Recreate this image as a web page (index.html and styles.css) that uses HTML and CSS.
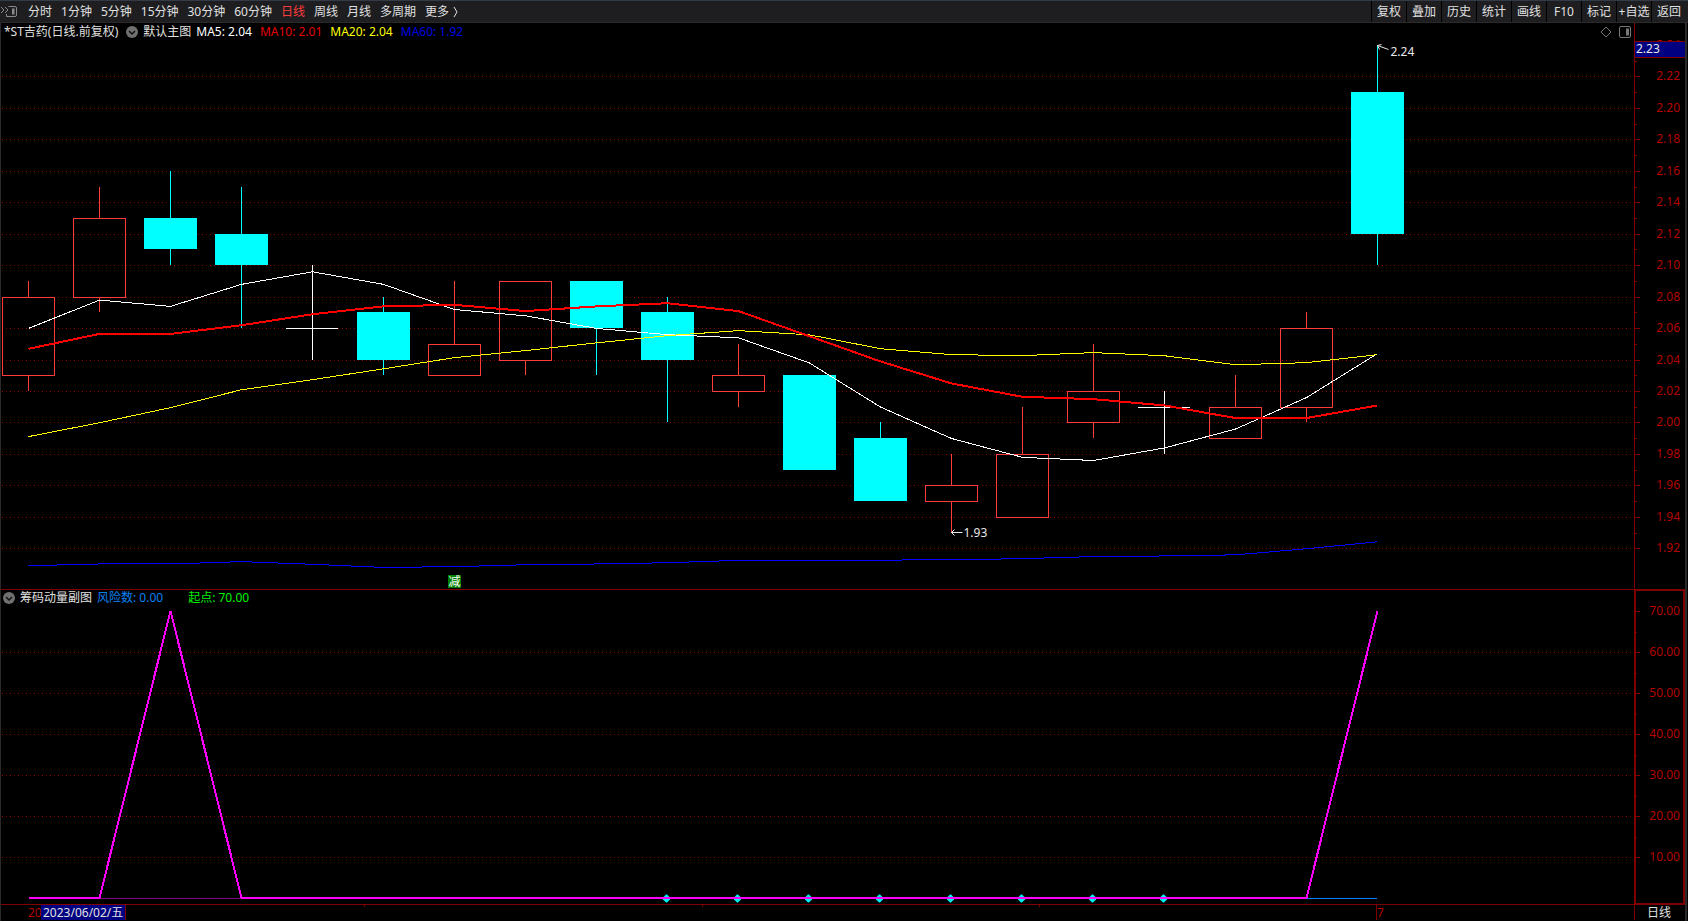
FILE: index.html
```html
<!DOCTYPE html>
<html lang="zh-CN">
<head>
<meta charset="utf-8">
<title>*ST吉药 日线</title>
<link rel="stylesheet" href="styles.css">
</head>
<body>
<header class="toolbar">
  <button class="dock" aria-label="侧栏">
    <svg width="18" height="14" viewBox="0 0 18 14" fill="none" stroke="#8a8a8a">
      <path d="M8.500 1.500H15Q16.500 1.500 16.500 3V10Q16.500 11.500 15 11.500H6.500V9"/>
      <path d="M12 3.500h2.500v6H12z" fill="#8a8a8a" stroke="none"/>
      <path d="M1 2l3 3-3 3M5 2l3 3-3 3"/>
    </svg>
  </button>
  <nav class="periods">
    <button>分时</button>
    <button>1分钟</button>
    <button>5分钟</button>
    <button>15分钟</button>
    <button>30分钟</button>
    <button>60分钟</button>
    <button class="active">日线</button>
    <button>周线</button>
    <button>月线</button>
    <button>多周期</button>
    <button class="more">更多 <svg width="6" height="12" viewBox="0 0 6 12" fill="none" stroke="currentColor"><path d="M1 1l3 5-3 5"/></svg></button>
  </nav>
  <div class="tools">
    <button>复权</button>
    <button>叠加</button>
    <button>历史</button>
    <button>统计</button>
    <button>画线</button>
    <button>F10</button>
    <button>标记</button>
    <button>+自选</button>
    <button>返回</button>
  </div>
</header>
<main class="charts">
  <section class="panel">
    <svg class="plot" id="price"></svg>
    <div class="legend legend-price">
      <span>*ST吉药(日线.前复权)</span>
      <button class="toggle" aria-label="主图指标"><svg width="12" height="12" viewBox="0 0 12 12"><circle cx="6" cy="6" r="6" fill="#707070"/><path d="M3 5l3 3 3-3" fill="none" stroke="#111" stroke-width="1.500"/></svg></button>
      <span class="name">默认主图</span>
      <span class="ma5">MA5: 2.04</span>
      <span class="ma10">MA10: 2.01</span>
      <span class="ma20">MA20: 2.04</span>
      <span class="ma60">MA60: 1.92</span>
      <span class="corner">
        <svg width="12" height="12" viewBox="0 0 12 12" fill="none" stroke="#777"><path d="M6 1l5 5-5 5-5-5z"/></svg>
        <svg width="12" height="12" viewBox="0 0 12 12" fill="none" stroke="#777"><rect x=".5" y=".5" width="11" height="11" rx="1.500"/><path d="M7 2.500h3v7H7z" fill="#777" stroke="none"/></svg>
      </span>
    </div>
  </section>
  <section class="panel">
    <svg class="plot" id="chip"></svg>
    <div class="legend legend-chip">
      <button class="toggle" aria-label="副图指标"><svg width="12" height="12" viewBox="0 0 12 12"><circle cx="6" cy="6" r="6" fill="#707070"/><path d="M3 5l3 3 3-3" fill="none" stroke="#111" stroke-width="1.500"/></svg></button>
      <span>筹码动量副图</span>
      <span class="risk">风险数: 0.00</span>
      <span class="start">起点: 70.00</span>
    </div>
  </section>
  <footer class="dates">
    <svg class="plot" id="timeline"></svg>
    <span class="year">20</span>
    <time class="cursor-date" datetime="2023-06-02">2023/06/02/五</time>
    <span class="period">日线</span>
  </footer>
</main>
<script src="chart.js"></script>
</body>
</html>
```

FILE: styles.css
```css
* {
  box-sizing: border-box;
}

body {
  margin: 0;
  height: 100vh;
  display: flex;
  flex-direction: column;
  overflow: hidden;
  background: #000;
  color: #e0e0e0;
  font: 12px/16px "Noto Sans", "Noto Sans CJK SC", sans-serif;
}

button {
  margin: 0;
  padding: 0;
  border: 0;
  background: none;
  color: inherit;
  font: inherit;
  white-space: nowrap;
}

svg {
  display: block;
}

.toolbar {
  display: flex;
  align-items: center;
  height: 23px;
  flex: none;
  padding-right: 2px;
  background: #1e1e21;
  border-top: 1px solid #323b47;
  border-bottom: 1px solid #2a2a2a;
}

.dock {
  width: 28px;
}

.periods {
  display: flex;
  gap: 9px;
}

.periods .active {
  color: #ff3c3c;
}

.periods .more {
  display: flex;
  align-items: center;
  gap: 4px;
}

.tools {
  display: flex;
  align-self: stretch;
  margin-left: auto;
}

.tools button {
  width: 35px;
  overflow: hidden;
  border-left: 1px solid #000;
}

.charts {
  flex: 1;
  min-height: 0;
  display: grid;
  grid-template-rows: 567fr 315fr 16px;
  margin-right: 1px;
  border-left: 1px solid #2a2a2a;
  border-right: 2px solid #2a2a2a;
}

.panel {
  position: relative;
  min-height: 0;
}

.plot {
  position: absolute;
  inset: 0;
  width: 100%;
  height: 100%;
}

.legend {
  position: relative;
  display: flex;
  align-items: center;
  height: 18px;
  white-space: nowrap;
}

.legend-price {
  gap: 8px;
  padding: 0 54px 0 3px;
}

.legend-chip {
  gap: 5px;
  height: 16px;
  padding-left: 2px;
}

.legend .name {
  margin: 0 -3px;
}

.corner {
  display: flex;
  gap: 7px;
  margin-left: auto;
}

.ma5 { color: #fff; }
.ma10 { color: #e60000; }
.ma20 { color: #ff0; }
.ma60 { color: #0000e6; }
.risk { color: #0a80f0; }

.start {
  margin-left: 20px;
  color: #00f000;
}

.dates {
  position: relative;
  display: flex;
  align-items: flex-start;
  line-height: 15px;
}

.year {
  position: relative;
  width: 40px;
  padding-left: 27px;
  overflow: hidden;
  color: #b40000;
}

.cursor-date {
  position: relative;
  padding: 0 2px;
  background: #000080;
  border-right: 1px solid #800000;
}

.period {
  width: 50px;
  margin-left: auto;
  padding-left: 12px;
}

.frame { stroke: #800000; fill: none; shape-rendering: crispEdges; }
.frame-bold { stroke: #800000; stroke-width: 2; fill: none; shape-rendering: crispEdges; }
.grid { stroke: #900000; stroke-dasharray: 1 3; shape-rendering: crispEdges; }
.scale { fill: #b40000; text-anchor: end; }
.up { stroke: #ff3c3c; fill: none; shape-rendering: crispEdges; }
.down { stroke: #0ff; fill: #0ff; shape-rendering: crispEdges; }
.flat { stroke: #fff; fill: none; shape-rendering: crispEdges; }
.line { fill: none; shape-rendering: crispEdges; }
.line-ma5 { stroke: #fff; }
.line-ma10 { stroke: #f00; stroke-width: 2; }
.line-ma20 { stroke: #ff0; }
.line-ma60 { stroke: #00f; }
.line-base { stroke: #800080; }
.line-risk { stroke: #0080ff; }
.line-start { stroke: #f0f; stroke-width: 2; }
.dot { fill: #00f0f0; }
.note { fill: #e8e8e8; }
.arrow { stroke: #e8e8e8; fill: none; }
.badge { fill: #008000; }
.badge-text { fill: #fff; text-anchor: middle; }
.cursor-box { fill: #000080; }
.month { fill: #b40000; }
```

FILE: chart.js
```js
const NS = "http://www.w3.org/2000/svg";
const AXIS = 51;

// open, close, high, low
const candles = [
  [2.03, 2.08, 2.09, 2.02], [2.08, 2.13, 2.15, 2.07], [2.13, 2.11, 2.16, 2.10],
  [2.12, 2.10, 2.15, 2.06], [2.06, 2.06, 2.10, 2.04], [2.07, 2.04, 2.08, 2.03],
  [2.03, 2.05, 2.09, 2.03], [2.04, 2.09, 2.09, 2.03], [2.09, 2.06, 2.09, 2.03],
  [2.07, 2.04, 2.08, 2.00], [2.02, 2.03, 2.05, 2.01], [2.03, 1.97, 2.03, 1.97],
  [1.99, 1.95, 2.00, 1.95], [1.95, 1.96, 1.98, 1.93], [1.94, 1.98, 2.01, 1.94],
  [2.00, 2.02, 2.05, 1.99], [2.01, 2.01, 2.02, 1.98], [1.99, 2.01, 2.03, 1.99],
  [2.01, 2.06, 2.07, 2.00], [2.21, 2.12, 2.24, 2.10]
];

const averages = {
  ma60: [1.9091, 1.9102, 1.9102, 1.9117, 1.91, 1.908, 1.9085, 1.9097, 1.9102, 1.911, 1.9125, 1.9127, 1.9127, 1.9128, 1.9136, 1.9149, 1.9153, 1.916, 1.9199, 1.9243],
  ma5: [2.06, 2.078, 2.074, 2.088, 2.096, 2.088, 2.072, 2.068, 2.06, 2.056, 2.054, 2.038, 2.01, 1.99, 1.978, 1.976, 1.984, 1.996, 2.016, 2.044],
  ma20: [1.9912, 2, 2.0096, 2.021, 2.0274, 2.0343, 2.0414, 2.0459, 2.0508, 2.0554, 2.0586, 2.0559, 2.0471, 2.0433, 2.0427, 2.0446, 2.0426, 2.0369, 2.0382, 2.0433],
  ma10: [2.047, 2.0565, 2.0565, 2.062, 2.069, 2.074, 2.075, 2.071, 2.074, 2.076, 2.071, 2.055, 2.039, 2.025, 2.0165, 2.015, 2.011, 2.003, 2.003, 2.011]
};

const start = candles.map((c, i) => (i === 2 || i === 19 ? 70 : 0));

function add(svg, tag, attrs, text) {
  const el = document.createElementNS(NS, tag);
  for (const key in attrs) el.setAttribute(key, attrs[key]);
  if (text !== undefined) el.textContent = text;
  svg.appendChild(el);
}

function path(svg, cls, d) {
  add(svg, "path", { class: cls, d });
}

function layout(id) {
  const svg = document.getElementById(id);
  svg.replaceChildren();
  const box = svg.getBoundingClientRect();
  const w = Math.round(box.width);
  const h = Math.round(box.height);
  const edge = w - AXIS;
  const step = Math.floor(edge / 23);
  const half = Math.floor((step - 18) / 2);
  return { svg, w, h, edge, half, x: i => half + 1 + i * step };
}

function drawLine(svg, cls, xs, ys) {
  add(svg, "polyline", { class: "line " + cls, points: xs.map((x, i) => x + "," + ys[i]).join(" ") });
}

function drawPrice() {
  const { svg, w, h, edge, half, x } = layout("price");
  const raw = p => (2.254 - p) * (h - 1) / 0.3599;
  const y = p => Math.round(raw(p)) + 0.5;

  for (let n = 192; n <= 224; n += 1) {
    const p = n / 100;
    const major = n % 2 === 0;
    if (major && n < 224) path(svg, "grid", `M1 ${y(p)}H${edge - 2}`);
    path(svg, "frame", `M${edge} ${y(p)}h${major ? 6 : 3}`);
    if (major) add(svg, "text", { class: "scale", x: w - 5, y: y(p) + 3 }, p.toFixed(2));
  }
  path(svg, "frame", `M${edge + 0.5} 0V${h}M0 ${h - 0.5}H${w}`);

  candles.forEach(([open, close, high, low], i) => {
    const cx = x(i) + 0.5;
    const top = y(Math.max(open, close));
    const bottom = y(Math.min(open, close));
    const cls = close > open ? "up" : close < open ? "down" : "flat";
    const body = bottom - top - (cls === "down" ? 1 : 0);
    path(svg, cls, `M${cx} ${y(high) - 0.5}V${top}M${cx} ${top + body}V${y(low) - 0.5}`);
    if (open === close) path(svg, cls, `M${cx - half - 0.5} ${top}h${half * 2}`);
    else add(svg, "rect", { class: cls, x: cx - half, y: top, width: half * 2, height: body });
  });

  for (const name in averages) {
    drawLine(svg, "line-" + name, candles.map((c, i) => x(i) + 0.5), averages[name].map(p => raw(p) + 0.3));
  }

  const hx = x(19) + 0.5;
  const hy = y(2.24);
  path(svg, "arrow", `M${hx} ${hy}l11 4M${hx + 4} ${hy - 1}l-4 1 2 4`);
  add(svg, "text", { class: "note", x: hx + 13, y: hy + 10 }, "2.24");
  const lx = x(13) + 0.5;
  const ly = y(1.93) - 1;
  path(svg, "arrow", `M${lx} ${ly}h11M${lx + 3} ${ly - 3}l-3 3 3 3`);
  add(svg, "text", { class: "note", x: lx + 12, y: ly + 4 }, "1.93");

  add(svg, "rect", { class: "badge", x: x(6) - 6, y: h - 15, width: 13, height: 13 });
  add(svg, "text", { class: "badge-text", x: x(6) + 0.5, y: h - 4 }, "减");

  add(svg, "rect", { class: "cursor-box", x: edge + 1, y: 18, width: AXIS - 1, height: 17 });
  path(svg, "frame", `M${edge} 18.5H${w}M${edge} 34.5H${w}`);
  add(svg, "text", { class: "note", x: edge + 2, y: 30 }, "2.23");
}

function drawChip() {
  const { svg, w, h, edge, x } = layout("chip");
  const raw = v => h - 7 - v * (h - 28) / 70;
  const y = v => Math.round(raw(v)) + 0.5;

  for (let v = 10; v <= 70; v += 5) {
    const major = v % 10 === 0;
    if (major && v < 70) path(svg, "grid", `M1 ${y(v)}H${edge - 2}`);
    path(svg, "frame", `M${edge} ${y(v)}h${major ? 6 : 3}`);
    if (major) add(svg, "text", { class: "scale", x: w - 5, y: y(v) + 3 }, v.toFixed(2));
  }
  path(svg, "frame", `M0 ${h - 0.5}H${w}`);
  path(svg, "frame-bold", `M${edge + 1} 0H${w - 1}V${h - 1}H${edge + 1}Z`);

  path(svg, "line line-base", `M${x(1)} ${y(0)}H${x(3)}`);
  path(svg, "line line-risk", `M${x(18)} ${y(0)}H${x(19)}`);
  for (let i = 9; i <= 16; i += 1) {
    path(svg, "dot", `M${x(i) - 1} ${y(0) - 4}h1l3 3v2l-3 3h-1l-3-3v-2z`);
  }
  drawLine(svg, "line-start", start.map((v, i) => x(i) + 0.5), start.map(v => raw(v)));
}

function drawTimeline() {
  const { svg, h, edge, x } = layout("timeline");
  [363.5, 701.5, 1038.5].forEach(t => path(svg, "frame", `M${Math.round(t / 1633 * edge) - 0.5} 0v2`));
  path(svg, "frame", `M${x(19) - 0.5} 0V${h - 1}M${edge + 0.5} 0V${h - 1}`);
  add(svg, "text", { class: "month", x: x(19), y: 12 }, "7");
}

function draw() {
  drawPrice();
  drawChip();
  drawTimeline();
}

draw();
window.addEventListener("resize", draw);
```
